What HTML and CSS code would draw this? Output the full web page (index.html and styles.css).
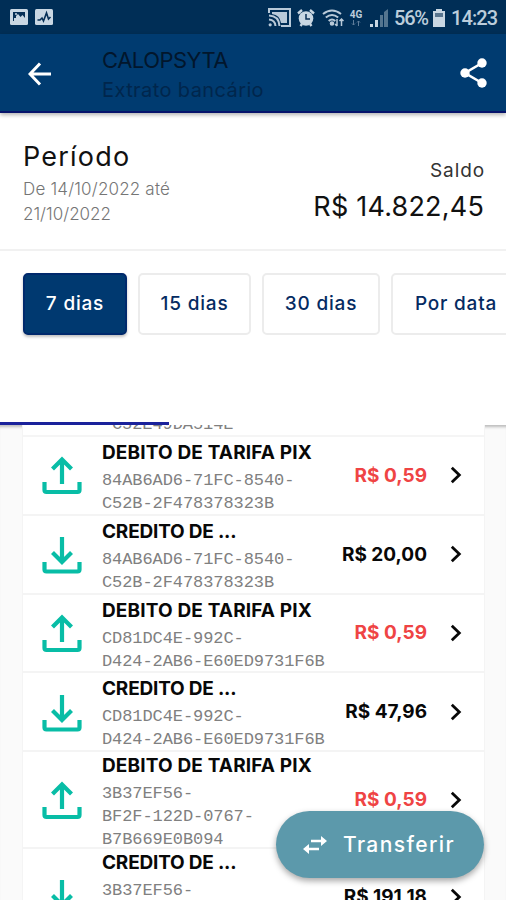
FILE: index.html
```html
<!DOCTYPE html>
<html lang="pt-BR">
<head>
<meta charset="utf-8">
<title>Extrato bancário</title>
<link rel="stylesheet" href="styles.css">
</head>
<body>
<svg class="defs" aria-hidden="true">
  <symbol id="up" viewBox="0 0 40 40"><path d="M20 29V5M10.500 14L20 4.500L29.500 14M2.500 27V35Q2.500 37 4.500 37H35.500Q37.500 37 37.500 35V27"/></symbol>
  <symbol id="down" viewBox="0 0 40 40"><path d="M20 3V27M10.500 18.500L20 28L29.500 18.500M2.500 28V35.500Q2.500 37.500 4.500 37.500H35.500Q37.500 37.500 37.500 35.500V28"/></symbol>
  <symbol id="chevron" viewBox="0 0 12 18"><path d="M1.800 1.800L9.300 9L1.800 16.200"/></symbol>
</svg>
<div class="screen">
  <div class="status">
    <div class="status-left">
      <svg width="18" height="16" viewBox="0 0 18 16"><rect width="18" height="16" rx="1.500" fill="#c9d7e3"/><path d="M3 12V3H15V9L12.500 6L10.500 8L8 5L6 7V9H4V12Z" fill="#062f56"/><circle cx="6" cy="5" r="1" fill="#c9d7e3"/></svg>
      <svg width="18" height="16" viewBox="0 0 18 16"><rect width="18" height="16" rx="1.500" fill="#c9d7e3"/><path d="M2.500 11H5L7 9L8.500 12L11.500 4L13.500 10L15.500 8" fill="none" stroke="#062f56" stroke-width="1.600"/></svg>
    </div>
    <div class="status-right">
      <svg class="cast" width="23" height="19" viewBox="0 0 23 19" fill="none" stroke="#b9cad9" stroke-width="2"><path d="M1 5V1H22V18H13"/><path d="M4 4H19V15H13Q12 7 4 6Z" fill="#b9cad9" stroke="none"/><path d="M1 7.500Q11 8 11.500 18M1 11.500Q7 12 7.500 18"/><circle cx="2.200" cy="16.800" r="1.600" fill="#b9cad9" stroke="none"/></svg>
      <svg class="alarm" width="18" height="18" viewBox="0 0 18 18"><circle cx="9" cy="9.500" r="7.300" fill="#c9d7e3"/><path d="M1 4.500L5 1M17 4.500L13 1M3.500 17L5 15M14.500 17L13 15" stroke="#c9d7e3" stroke-width="2.400"/><path d="M9 5V10H13" fill="none" stroke="#0a2f56" stroke-width="1.500"/></svg>
      <svg class="wifi" width="22" height="18" viewBox="0 0 22 18" fill="none" stroke="#b9cad9" stroke-width="2"><path d="M1 5Q10-2 19 5M3.800 8.500Q10 3.500 16.200 8.500M6.700 12Q10 9 13.300 12"/><circle cx="10" cy="14.500" r="1.300" fill="#b9cad9"/><path d="M15 10V17M13 15L15 17M19.500 17V10M17.500 12L19.500 10L21.500 12" stroke-width="1.500"/></svg>
      <div class="net"><span>4G</span><svg width="10" height="6" viewBox="0 0 10 6"><path d="M2.500 0V5M1 3.500L2.500 5L4 3.500M7.500 6V1M6 2.500L7.500 1L9 2.500" fill="none" stroke="#5f7d9a"/></svg></div>
      <svg class="signal" width="18" height="18" viewBox="0 0 18 18"><path d="M0 15H3V18H0ZM5 11H8V18H5Z" fill="#c9d7e3"/><path d="M10 6H13V18H10ZM14 3L18 0V18H14Z" fill="#54758f"/></svg>
      <span class="battery-value">56%</span>
      <svg class="battery" width="12" height="18" viewBox="0 0 12 18"><path d="M3 0H9V2H12V18H0V2H3Z" fill="#c9d7e3"/><path d="M2 4H10V8H2Z" fill="#58758f"/></svg>
      <span class="time">14:23</span>
    </div>
  </div>
  <header class="appbar">
    <svg class="back" width="24" height="24" viewBox="0 0 24 24"><path d="M23 12H2.500M12 1.500L2 12L12 22.500"/></svg>
    <div class="titles">
      <div class="name">CALOPSYTA</div>
      <div class="sub">Extrato bancário</div>
    </div>
    <svg class="share" width="27" height="30" viewBox="0 0 27 30"><path d="M22 5L5 15L22 25" fill="none" stroke="#fff" stroke-width="2.600"/><g fill="#fff"><circle cx="22" cy="5" r="4.700"/><circle cx="5" cy="15" r="4.700"/><circle cx="22" cy="25" r="4.700"/></g></svg>
  </header>
  <section class="summary">
    <div class="period">
      <div class="period-title">Período</div>
      <div class="period-range"><span class="d1">De 14/10/2022 até</span><br><span class="d2">21/10/2022</span></div>
    </div>
    <div class="balance">
      <div class="balance-label">Saldo</div>
      <div class="balance-value">R$ 14.822,45</div>
    </div>
  </section>
  <section class="filters">
    <div class="tab active">7 dias</div>
    <div class="tab t15">15 dias</div>
    <div class="tab t30">30 dias</div>
    <div class="tab tdate">Por data</div>
  </section>
  <div class="progress"></div>
  <main class="viewport">
    <div class="list">
      <div class="peek"><span>C52E49DA514E</span></div>
      <div class="row">
        <svg class="io"><use href="#up"/></svg>
        <div class="info"><div class="kind debit">DEBITO DE TARIFA PIX</div><div class="code">84AB6AD6-71FC-8540-<br>C52B-2F478378323B</div></div>
        <div class="amount red">R$ 0,59</div><svg class="chev"><use href="#chevron"/></svg>
      </div>
      <div class="row">
        <svg class="io"><use href="#down"/></svg>
        <div class="info"><div class="kind">CREDITO DE ...</div><div class="code">84AB6AD6-71FC-8540-<br>C52B-2F478378323B</div></div>
        <div class="amount">R$ 20,00</div><svg class="chev"><use href="#chevron"/></svg>
      </div>
      <div class="row">
        <svg class="io"><use href="#up"/></svg>
        <div class="info"><div class="kind debit">DEBITO DE TARIFA PIX</div><div class="code">CD81DC4E-992C-<br>D424-2AB6-E60ED9731F6B</div></div>
        <div class="amount red">R$ 0,59</div><svg class="chev"><use href="#chevron"/></svg>
      </div>
      <div class="row">
        <svg class="io"><use href="#down"/></svg>
        <div class="info"><div class="kind">CREDITO DE ...</div><div class="code">CD81DC4E-992C-<br>D424-2AB6-E60ED9731F6B</div></div>
        <div class="amount">R$ 47,96</div><svg class="chev"><use href="#chevron"/></svg>
      </div>
      <div class="row tall">
        <svg class="io"><use href="#up"/></svg>
        <div class="info"><div class="kind debit">DEBITO DE TARIFA PIX</div><div class="code">3B37EF56-<br>BF2F-122D-0767-<br>B7B669E0B094</div></div>
        <div class="amount red">R$ 0,59</div><svg class="chev"><use href="#chevron"/></svg>
      </div>
      <div class="row tall">
        <svg class="io"><use href="#down"/></svg>
        <div class="info"><div class="kind">CREDITO DE ...</div><div class="code">3B37EF56-<br>BF2F-122D-0767-<br>B7B669E0B094</div></div>
        <div class="amount">R$ 191,18</div><svg class="chev"><use href="#chevron"/></svg>
      </div>
    </div>
  </main>
  <button class="fab">
    <svg width="26" height="20" viewBox="0 0 26 20"><path d="M9 6H20M17 14H6" stroke="#fff" stroke-width="2.600"/><path d="M19 1L25 6L19 11ZM7 9L1 14L7 19Z" fill="#fff"/></svg>
    <span>Transferir</span>
  </button>
</div>
</body>
</html>
```
FILE: styles.css
```css
* { box-sizing: border-box; }
body { margin: 0; background: #fafafa; font-family: Inter, "Liberation Sans", sans-serif; color: #111; }
.defs { position: absolute; width: 0; height: 0; }
.screen { position: relative; width: 506px; height: 900px; overflow: hidden; display: flex; flex-direction: column; white-space: nowrap; }

.status { flex: none; height: 34px; background: #002e56; display: flex; justify-content: space-between; padding: 0 10px 0 10px; color: #bccddb; }
.status-left { display: flex; gap: 7px; padding-top: 9px; }
.status-right { display: flex; align-items: center; padding-top: 1px; font: 500 20px Roboto, sans-serif; }
.cast { margin-right: 6px; }
.alarm { margin-right: 7px; }
.wifi { margin-right: 5px; }
.net { width: 14px; height: 18px; margin-right: 7px; display: flex; flex-direction: column; align-items: center; font: 700 10px/11px Roboto, sans-serif; }
.signal { margin-right: 6px; }
.battery-value { width: 34px; margin-right: 5px; letter-spacing: -1.2px; }
.battery { margin-right: 6px; }
.time { width: 45px; letter-spacing: -.9px; }

.appbar { flex: none; height: 79px; background: #003b70; border-bottom: 2px solid #06136b; display: flex; align-items: flex-start; padding: 0 19px 0 28px; position: relative; z-index: 2; box-shadow: 0 2px 4px rgba(0,0,0,.3); }
.back { margin-top: 28px; fill: none; stroke: #fff; stroke-width: 3; }
.titles { flex: 1; margin: 11px 0 0 50px; }
.name { font-size: 22px; line-height: 30px; color: #02162c; letter-spacing: -.5px; }
.sub { font-size: 20px; line-height: 30px; color: #00264c; letter-spacing: .4px; }
.share { margin-top: 24px; }

.summary { flex: none; height: 138px; background: #fff; border-bottom: 2px solid #f1f1f1; display: flex; justify-content: space-between; padding: 0 22px 0 23px; }
.period { padding-top: 25px; }
.period-title { font-size: 27px; line-height: 38px; letter-spacing: 1.2px; }
.period-range { font-size: 17px; line-height: 25px; color: #757575; font-weight: 300; padding-top: 1px; }
.d1 { letter-spacing: .18px; }
.balance { padding-top: 44px; text-align: right; }
.balance-label { font-size: 19px; line-height: 28px; color: #333; letter-spacing: .9px; margin-right: -1px; }
.balance-value { font-size: 27px; line-height: 44px; letter-spacing: .2px; }

.filters { flex: none; height: 171px; background: #fff; display: flex; gap: 11px; padding: 22px 0 0 23px; }
.tab { flex: none; height: 62px; border: 2px solid #ececec; border-radius: 5px; font-size: 19px; font-weight: 500; line-height: 58px; text-align: center; color: #052b62; width: 104px; letter-spacing: .8px; }
.tab.active { background: #003970; border-color: #00296c; color: #fff; box-shadow: 0 2px 3px rgba(0,0,0,.25); }
.tab.t15 { width: 113px; }
.tab.t30 { width: 118px; }
.tab.tdate { width: 130px; }

.progress { flex: none; height: 3px; background: linear-gradient(to right, #1a229b 169px, #fff 169px); position: relative; z-index: 1; }
.viewport { flex: 1; min-height: 0; padding: 0 22px 0 23px; overflow: hidden; box-shadow: inset 0 4px 3px -2px #bbb; }
.list { background: #fff; box-shadow: 0 0 0 1px #f4f4f4; }
.peek { height: 12px; overflow: hidden; display: flex; align-items: flex-end; padding: 0 0 0 89px; border-bottom: 2px solid #f5f5f5; }
.peek span { height: 22px; }
.peek span, .code { font: 17px/23px "Liberation Mono", monospace; color: #808080; letter-spacing: -.08px; }
.row { height: 78.800px; border-bottom: 2px solid #f4f4f4; display: flex; align-items: center; padding: 0 22px 0 19px; }
.row.tall { height: 97px; }
.io { flex: none; width: 40px; height: 40px; margin-right: 20px; fill: none; stroke: #08bda6; stroke-width: 4.200; }
.info { flex: 1; align-self: flex-start; padding-top: 2px; }
.code { padding-top: 2px; }
.row.tall .info { padding-top: 0; }
.kind { font-size: 19px; line-height: 28px; font-weight: 700; color: #080808; letter-spacing: -.2px; }
.kind.debit { letter-spacing: .15px; }
.amount { font-size: 19px; font-weight: 700; color: #080808; margin-right: 23px; }
.amount.red { color: #ef4444; }
.chev { flex: none; width: 12px; height: 18px; fill: none; stroke: #080808; stroke-width: 2.800; }

.fab { position: absolute; left: 276px; top: 811px; width: 208px; height: 67px; border: 0; border-radius: 34px; background: #5c99ab; color: #fff; display: flex; align-items: center; gap: 15px; padding: 0 0 0 26px; font: 500 21px Inter, sans-serif; letter-spacing: 1.4px; box-shadow: 0 3px 6px rgba(0,0,0,.35); z-index: 3; }
```
